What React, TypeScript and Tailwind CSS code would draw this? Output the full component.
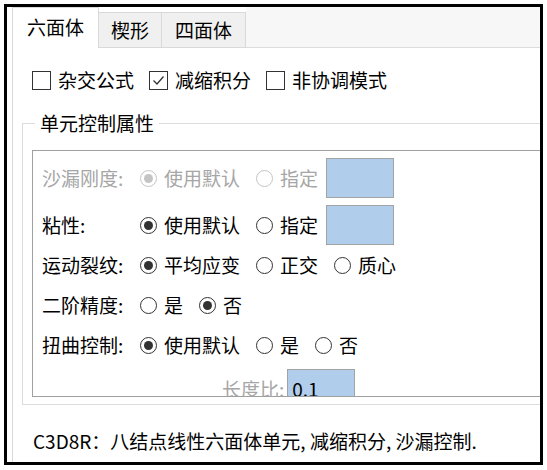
import React from "react";

const FONT = { fontFamily: '"Noto Sans CJK SC", "Noto Sans", sans-serif' };

function Radio({ checked, disabled, label }: { checked?: boolean; disabled?: boolean; label: string }) {
  const c = disabled ? "border-[#c4c4c4]" : "border-[#333333]";
  const d = disabled ? "bg-[#c4c4c4]" : "bg-[#333333]";
  return (
    <div className="flex items-center">
      <div className={`w-[17px] h-[17px] rounded-full border ${c} flex items-center justify-center bg-white`}>
        {checked ? <div className={`w-[9px] h-[9px] rounded-full ${d}`} /> : null}
      </div>
      <span className={`ml-[7px] ${disabled ? "text-[#a6a6a6]" : "text-black"}`}>{label}</span>
    </div>
  );
}

function Check({ checked, label }: { checked?: boolean; label: string }) {
  return (
    <div className="flex items-center">
      <div className="w-[19px] h-[19px] border border-[#333333] bg-white flex items-center justify-center">
        {checked ? (
          <svg width="15" height="15" viewBox="0 0 15 15">
            <path d="M2.5 7.5 L6 11 L12.5 3.5" fill="none" stroke="#333" strokeWidth="1.3" />
          </svg>
        ) : null}
      </div>
      <span className="ml-[7px] text-black">{label}</span>
    </div>
  );
}

function Box({ text }: { text?: string }) {
  return (
    <div className="w-[68px] h-[40px] shrink-0 bg-[#b0cdeb] border border-[#a3a3a3] flex items-center pl-[4px] text-black">
      {text}
    </div>
  );
}

export default function App() {
  return (
    <div className="w-[547px] h-[470px] bg-white text-[19px] leading-[24px]" style={FONT}>
      <div className="ml-[4px] mt-[4px] w-[539px] h-[461px] border-[3px] border-black overflow-hidden bg-white">
        <div className="pl-[5px] w-[640px]">
          {/* tab header */}
          <div className="flex items-end h-[41px]">
            <div className="w-[87px] h-[41px] bg-white border-l border-t border-r border-[#d9d9d9] flex items-center justify-center pb-[2px] text-black">
              六面体
            </div>
            <div className="w-[63px] h-[36px] bg-[#f0f0f0] border-t border-r border-b border-[#d9d9d9] flex items-center justify-center text-black">
              楔形
            </div>
            <div className="w-[84px] h-[36px] bg-[#f0f0f0] border-t border-r border-b border-[#d9d9d9] flex items-center justify-center text-black">
              四面体
            </div>
            <div className="flex-1 self-stretch bg-[#f7f7f7] border-b border-[#dcdcdc]" />
          </div>
          {/* tab page */}
          <div className="border-l border-[#d9d9d9] h-[420px]">
            <div className="flex items-center gap-[15px] pl-[19px] pt-[21px] h-[43px]">
              <Check label="杂交公式" />
              <Check checked label="减缩积分" />
              <Check label="非协调模式" />
            </div>
            {/* group box */}
            <div className="relative ml-[9px] mt-[32px] h-[282px] border border-[#dcdcdc]">
              <div className="absolute left-[12px] top-[-13px] px-[5px] bg-white text-black">单元控制属性</div>
              <div className="ml-[9px] mt-[26px] h-[247px] border border-[#a0a0a0] overflow-hidden">
                <div className="pt-[7px] pl-[9px] flex flex-col">
                  <div className="flex items-center h-[40px]">
                    <div className="w-[98px] text-[#a6a6a6]">沙漏刚度:</div>
                    <div className="flex items-center gap-[16px]">
                      <Radio checked disabled label="使用默认" />
                      <Radio disabled label="指定" />
                    </div>
                    <div className="ml-[8px]"><Box /></div>
                  </div>
                  <div className="flex items-center h-[40px] mt-[7px]">
                    <div className="w-[98px] text-black">粘性:</div>
                    <div className="flex items-center gap-[16px]">
                      <Radio checked label="使用默认" />
                      <Radio label="指定" />
                    </div>
                    <div className="ml-[8px]"><Box /></div>
                  </div>
                  <div className="flex items-center h-[40px]">
                    <div className="w-[98px] text-black">运动裂纹:</div>
                    <div className="flex items-center gap-[16px]">
                      <Radio checked label="平均应变" />
                      <Radio label="正交" />
                      <Radio label="质心" />
                    </div>
                  </div>
                  <div className="flex items-center h-[40px]">
                    <div className="w-[98px] text-black">二阶精度:</div>
                    <div className="flex items-center gap-[16px]">
                      <Radio label="是" />
                      <Radio checked label="否" />
                    </div>
                  </div>
                  <div className="flex items-center h-[40px]">
                    <div className="w-[98px] text-black">扭曲控制:</div>
                    <div className="flex items-center gap-[16px]">
                      <Radio checked label="使用默认" />
                      <Radio label="是" />
                      <Radio label="否" />
                    </div>
                  </div>
                  <div className="flex items-center h-[40px] mt-[4px] pl-[180px]">
                    <div className="text-[#a6a6a6]">长度比:</div>
                    <div className="ml-[3px]"><Box text="0.1" /></div>
                  </div>
                </div>
              </div>
            </div>
            <div className="pl-[20px] mt-[24px] text-black">C3D8R：八结点线性六面体单元, 减缩积分, 沙漏控制.</div>
          </div>
        </div>
      </div>
    </div>
  );
}
